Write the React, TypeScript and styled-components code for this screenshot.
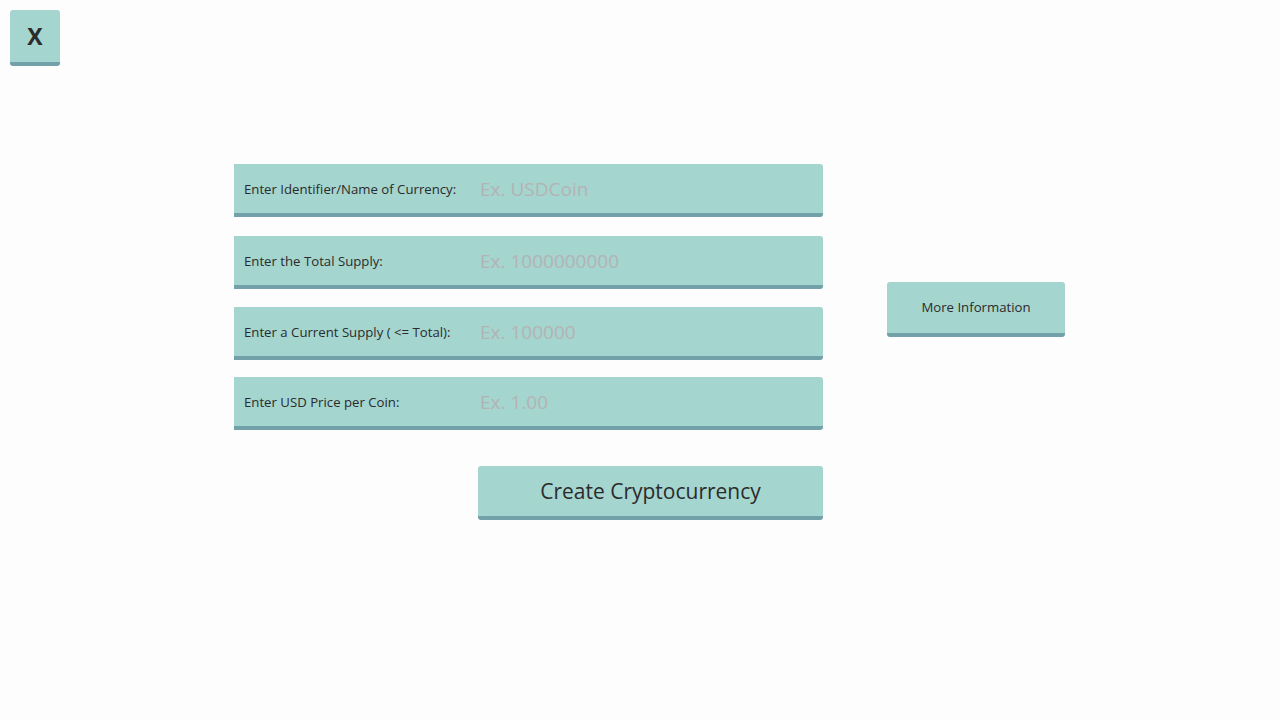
import React from "react";
import styled, { createGlobalStyle } from "styled-components";

const GlobalStyle = createGlobalStyle`
  html, body {
    margin: 0;
    padding: 0;
    background: #fdfdfd;
    font-family: "Open Sans", "Noto Sans", sans-serif;
    color: #2b2b2b;
  }
`;

const TEAL = "#a5d5cf";
const TEAL_DARK = "#73a1a9";

const Page = styled.div`
  width: 1280px;
  height: 720px;
  padding: 10px 0 0 10px;
  box-sizing: border-box;
`;

const CloseButton = styled.button`
  width: 50px;
  height: 56px;
  border: none;
  border-bottom: 4px solid ${TEAL_DARK};
  border-radius: 3px;
  background: ${TEAL};
  font-family: "Open Sans", sans-serif;
  font-size: 23px;
  font-weight: 700;
  color: #2b2b2b;
  padding: 0;
  display: flex;
  align-items: center;
  justify-content: center;
  box-sizing: border-box;
`;

const Body = styled.div`
  display: flex;
  margin-top: 98px;
  padding-left: 224px;
`;

const Form = styled.div`
  width: 589px;
  display: flex;
  flex-direction: column;
`;

const Row = styled.div<{ $gap: number }>`
  display: flex;
  height: 53px;
  margin-bottom: ${(p) => p.$gap}px;
`;

const Label = styled.div`
  width: 233px;
  background: ${TEAL};
  border-bottom: 4px solid ${TEAL_DARK};
  box-sizing: border-box;
  display: flex;
  align-items: center;
  padding-left: 10px;
  font-size: 13.2px;
  white-space: nowrap;
`;

const Input = styled.input`
  flex: 1;
  height: 53px;
  margin: 0;
  border: none;
  border-bottom: 4px solid ${TEAL_DARK};
  border-radius: 0 3px 3px 0;
  background: ${TEAL};
  box-sizing: border-box;
  padding: 0 13px;
  font-family: "Open Sans", sans-serif;
  font-size: 19px;
  color: #2b2b2b;
  outline: none;
  &::placeholder {
    color: #b4b3b3;
  }
`;

const SubmitRow = styled.div`
  display: flex;
  justify-content: flex-end;
  margin-top: 36px;
`;

const BigButton = styled.button`
  width: 345px;
  height: 54px;
  border: none;
  border-bottom: 4px solid ${TEAL_DARK};
  border-radius: 3px;
  background: ${TEAL};
  font-family: "Open Sans", sans-serif;
  font-size: 21px;
  color: #2b2b2b;
  box-sizing: border-box;
  padding: 0;
`;

const Aside = styled.div`
  padding-top: 118px;
  margin-left: 64px;
`;

const InfoButton = styled.button`
  width: 178px;
  height: 55px;
  border: none;
  border-bottom: 4px solid ${TEAL_DARK};
  border-radius: 3px;
  background: ${TEAL};
  font-family: "Open Sans", sans-serif;
  font-size: 13.2px;
  color: #2b2b2b;
  box-sizing: border-box;
  padding: 0 0 2px;
`;

const FIELDS = [
  { label: "Enter Identifier/Name of Currency:", placeholder: "Ex. USDCoin", gap: 19 },
  { label: "Enter the Total Supply:", placeholder: "Ex. 1000000000", gap: 18 },
  { label: "Enter a Current Supply ( <= Total):", placeholder: "Ex. 100000", gap: 17 },
  { label: "Enter USD Price per Coin:", placeholder: "Ex. 1.00", gap: 0 },
];

const App = () => {
  return (
    <Page>
      <GlobalStyle />
      <CloseButton>X</CloseButton>
      <Body>
        <Form>
          {FIELDS.map((f) => (
            <Row key={f.label} $gap={f.gap}>
              <Label>{f.label}</Label>
              <Input placeholder={f.placeholder} />
            </Row>
          ))}
          <SubmitRow>
            <BigButton>Create Cryptocurrency</BigButton>
          </SubmitRow>
        </Form>
        <Aside>
          <InfoButton>More Information</InfoButton>
        </Aside>
      </Body>
    </Page>
  );
};

export default App;
